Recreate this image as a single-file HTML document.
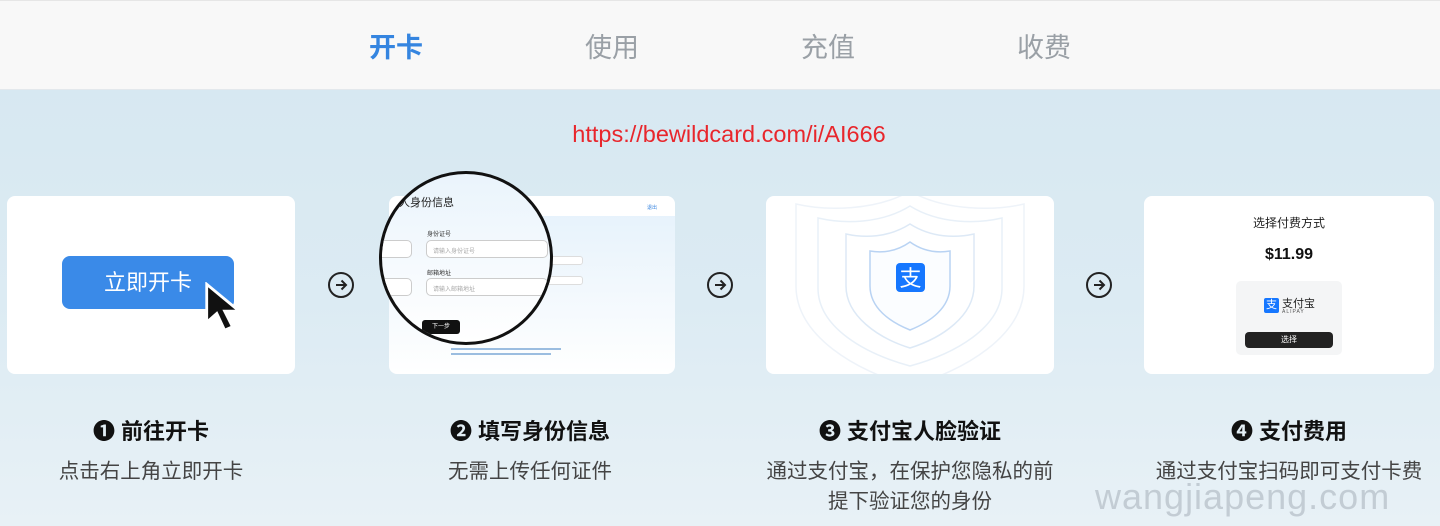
<!DOCTYPE html>
<html><head><meta charset="utf-8"><style>
*{margin:0;padding:0;box-sizing:border-box}
body{width:1440px;height:526px;overflow:hidden;font-family:"Liberation Sans","Noto Sans CJK SC",sans-serif;background:linear-gradient(#d5e7f1 0,#dcebf3 300px,#e8f1f6 526px);position:relative}
.top{position:absolute;left:0;top:0;width:1440px;height:90px;background:#f8f8f8;border-top:1px solid #e6e6e6;border-bottom:1px solid #e3e8ec}
.tab{position:absolute;top:25px;font-size:27px;color:#9aa0a6;transform:translateX(-50%)}
.tab.on{color:#3585e0;font-weight:bold}
.url{position:absolute;top:121px;left:0;width:1458px;text-align:center;color:#e8262c;font-size:23.5px}
.card{position:absolute;top:196px;height:178px;background:#fff;border-radius:8px;overflow:hidden}
.arr{position:absolute;top:272px;width:26px;height:26px;border:2px solid #222;border-radius:50%}
.arr svg{position:absolute;left:3px;top:3px}
.t{position:absolute;top:414px;font-size:22px;font-weight:bold;color:#111;transform:translateX(-50%);white-space:nowrap}
.s{position:absolute;top:457px;font-size:20.5px;color:#444;transform:translateX(-50%);text-align:center;line-height:30px;white-space:nowrap}
</style></head><body>
<div class="top">
<div class="tab on" style="left:396px">开卡</div>
<div class="tab" style="left:612px">使用</div>
<div class="tab" style="left:828px">充值</div>
<div class="tab" style="left:1044px">收费</div>
</div>
<div class="url">https://bewildcard.com/i/AI666</div>

<div class="card" style="left:7px;width:288px">
<div style="position:absolute;left:55px;top:60px;width:172px;height:53px;background:#3a8ae8;border-radius:8px;color:#fff;font-size:22px;text-align:center;line-height:53px">立即开卡</div>
<svg style="position:absolute;left:196px;top:86px" width="50" height="56" viewBox="0 0 44 50"><path d="M3 2 L3 36 L12 28 L19 43 L26 40 L19 26 L32 26 Z" fill="#111" stroke="#fff" stroke-width="2.5"/></svg>
</div>
<div class="arr" style="left:328px"><svg width="16" height="16" viewBox="0 0 16 16"><path d="M3 8H13M8.5 3.5L13 8L8.5 12.5" fill="none" stroke="#222" stroke-width="2"/></svg></div>

<div class="card" style="left:389px;width:286px;background:linear-gradient(180deg,#e4f1fb,#fff)">
<div style="position:absolute;left:0;top:0;width:286px;height:20px;background:#fff"></div>
<div style="position:absolute;left:258px;top:8px;font-size:5px;color:#3a86e0">退出</div>
<div style="position:absolute;left:152px;top:60px;width:42px;height:9px;border:1px solid #ddd;border-radius:3px;background:#fff"></div>
<div style="position:absolute;left:152px;top:80px;width:42px;height:9px;border:1px solid #ddd;border-radius:3px;background:#fff"></div>
<div style="position:absolute;left:62px;top:152px;width:110px;height:2px;background:#9bbde0"></div>
<div style="position:absolute;left:62px;top:157px;width:100px;height:2px;background:#9bbde0"></div>
</div>
<div style="position:absolute;left:379px;top:171px;width:174px;height:174px;border:3px solid #111;border-radius:50%;background:linear-gradient(180deg,#eaf4fc,#fff);overflow:hidden">
<div style="position:absolute;left:6px;top:20px;font-size:11px;color:#222">个人身份信息</div>
<div style="position:absolute;left:45px;top:55px;font-size:6px;color:#333">身份证号</div>
<div style="position:absolute;left:44px;top:66px;width:122px;height:18px;border:1px solid #ccc;border-radius:5px;background:#fff;font-size:6px;color:#aaa;padding:5px 6px">请输入身份证号</div>
<div style="position:absolute;left:45px;top:94px;font-size:6px;color:#333">邮箱地址</div>
<div style="position:absolute;left:44px;top:104px;width:122px;height:18px;border:1px solid #ccc;border-radius:5px;background:#fff;font-size:6px;color:#aaa;padding:5px 6px">请输入邮箱地址</div>
<div style="position:absolute;left:-10px;top:66px;width:40px;height:18px;border:1px solid #ccc;border-radius:5px;background:#fff"></div>
<div style="position:absolute;left:-10px;top:104px;width:40px;height:18px;border:1px solid #ccc;border-radius:5px;background:#fff"></div>
<div style="position:absolute;left:40px;top:146px;width:38px;height:14px;background:#111;border-radius:3px;color:#fff;font-size:6px;text-align:center;line-height:14px">下一步</div>
</div>
<div class="arr" style="left:707px"><svg width="16" height="16" viewBox="0 0 16 16"><path d="M3 8H13M8.5 3.5L13 8L8.5 12.5" fill="none" stroke="#222" stroke-width="2"/></svg></div>

<div class="card" style="left:766px;width:288px">
<svg width="288" height="178" viewBox="0 0 288 178">
<g fill="none">
<path d="M144 -5 C110 15 60 15 30 8 L30 90 C30 140 90 175 144 190 C198 175 258 140 258 90 L258 8 C228 15 178 15 144 -5Z" stroke="#eef3f9" stroke-width="1.5"/>
<path d="M144 10 C115 28 78 28 52 22 L52 92 C52 132 100 158 144 170 C188 158 236 132 236 92 L236 22 C210 28 173 28 144 10Z" stroke="#e8f0f8" stroke-width="1.5"/>
<path d="M144 28 C122 42 98 42 80 38 L80 90 C80 120 112 142 144 152 C176 142 208 120 208 90 L208 38 C190 42 166 42 144 28Z" stroke="#dde9f6" stroke-width="1.5"/>
<path d="M144 46 C130 56 116 57 104 55 L104 90 C104 112 124 126 144 134 C164 126 184 112 184 90 L184 55 C172 57 158 56 144 46Z" stroke="#b9d3f3" stroke-width="1.5" fill="#fbfdff"/>
</g>
<rect x="130" y="67" width="29" height="29" rx="4" fill="#1677ff"/>
<text x="144.5" y="90" text-anchor="middle" fill="#fff" font-size="22" font-family="Noto Sans CJK SC">支</text>
</svg>
</div>
<div class="arr" style="left:1086px"><svg width="16" height="16" viewBox="0 0 16 16"><path d="M3 8H13M8.5 3.5L13 8L8.5 12.5" fill="none" stroke="#222" stroke-width="2"/></svg></div>

<div class="card" style="left:1144px;width:290px">
<div style="position:absolute;left:0;width:290px;top:18px;text-align:center;font-size:12px;color:#222">选择付费方式</div>
<div style="position:absolute;left:0;width:290px;top:50px;text-align:center;font-size:16px;font-weight:bold;color:#111">$11.99</div>
<div style="position:absolute;left:92px;top:85px;width:106px;height:74px;background:#f4f5f6;border-radius:5px">
<div style="position:absolute;left:28px;top:17px;width:15px;height:15px;background:#1677ff;border-radius:2px;color:#fff;font-size:11px;line-height:15px;text-align:center">支</div>
<div style="position:absolute;left:46px;top:14px;font-size:11px;color:#222">支付宝</div>
<div style="position:absolute;left:46px;top:28px;font-size:5px;color:#555;letter-spacing:1px">ALIPAY</div>
<div style="position:absolute;left:9px;top:51px;width:88px;height:16px;background:#222;border-radius:4px;color:#fff;font-size:8px;line-height:16px;text-align:center">选择</div>
</div>
</div>

<div class="t" style="left:151px">❶ 前往开卡</div>
<div class="t" style="left:530px">❷ 填写身份信息</div>
<div class="t" style="left:910px">❸ 支付宝人脸验证</div>
<div class="t" style="left:1289px">❹ 支付费用</div>
<div class="s" style="left:151px">点击右上角立即开卡</div>
<div class="s" style="left:530px">无需上传任何证件</div>
<div class="s" style="left:910px">通过支付宝，在保护您隐私的前<br>提下验证您的身份</div>
<div class="s" style="left:1289px">通过支付宝扫码即可支付卡费</div>
<div style="position:absolute;left:1095px;top:476px;font-size:36px;color:rgba(150,160,170,0.45);font-family:'Liberation Sans',sans-serif;letter-spacing:1px">wangjiapeng.com</div>
</body></html>
